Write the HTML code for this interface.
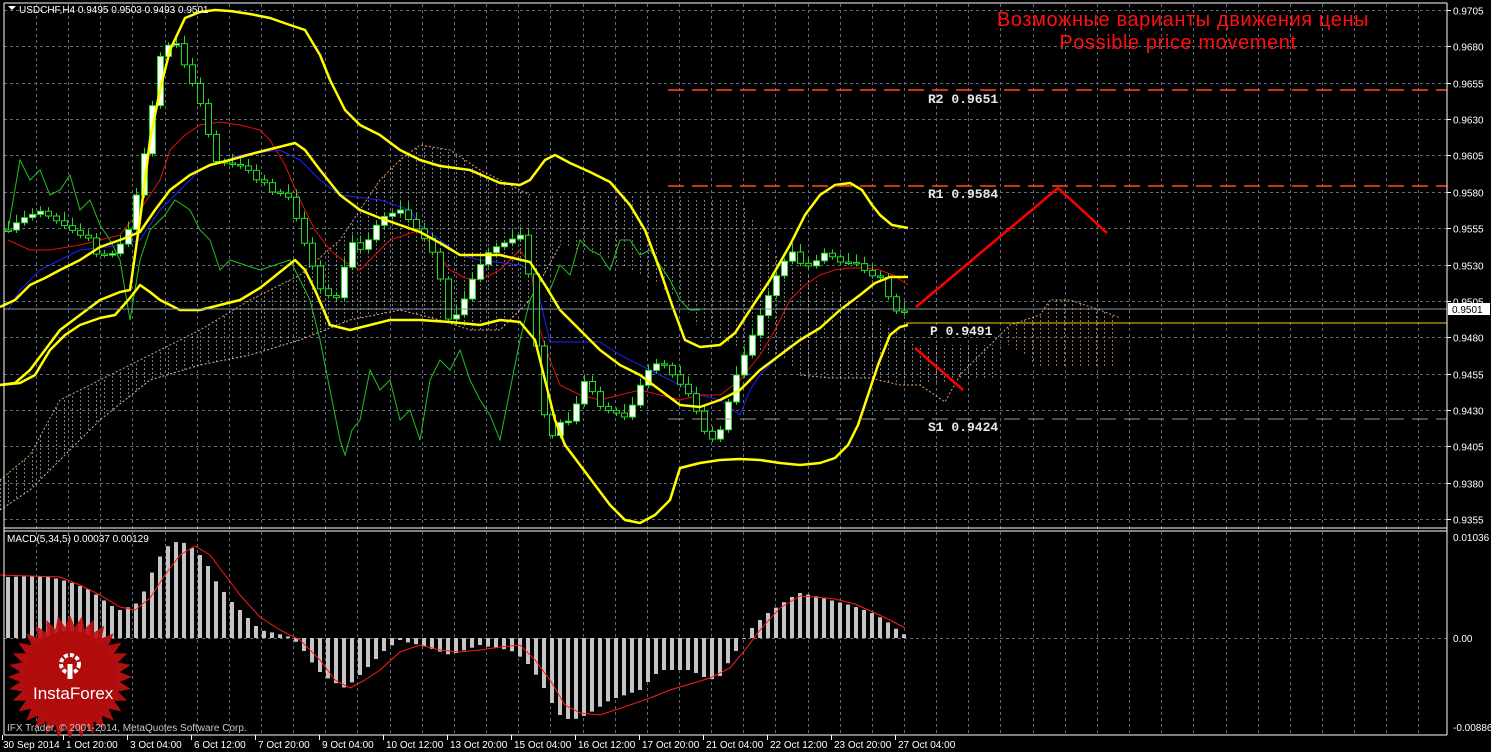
<!DOCTYPE html>
<html><head><meta charset="utf-8"><style>
html,body{margin:0;padding:0;background:#000;width:1491px;height:752px;overflow:hidden}
svg{display:block}
text{font-family:"Liberation Sans",sans-serif}
text.mono{font-family:"Liberation Mono",monospace;font-weight:bold}
</style></head><body>
<svg id="s" width="1491" height="752" xmlns="http://www.w3.org/2000/svg">
<defs>
<pattern id="hatch" width="8" height="4" patternUnits="userSpaceOnUse"><rect x="0" y="0" width="1" height="2" fill="#ddd"/></pattern>
<pattern id="hatch2" width="8" height="4" patternUnits="userSpaceOnUse"><rect x="0" y="0" width="1" height="2" fill="#e8a060"/></pattern>
</defs>
<rect width="1491" height="752" fill="#000"/>
<g id="grid" stroke="#5f6a78" stroke-width="1" stroke-dasharray="3,3"></g>
<polygon fill="url(#hatch)" opacity="0.55" points="0,480 30,455 60,400 100,380 150,355 200,330 250,300 300,275 340,240 380,180 400,160 420,145 450,150 480,170 510,185 530,195 560,195 600,195 650,195 700,198 740,200 780,260 800,270 830,290 870,310 900,335 920,345 960,345 1000,345 1000,380 960,380 920,385 900,385 860,378 820,378 800,375 780,355 740,350 700,330 680,300 650,280 600,255 560,245 530,300 500,330 470,330 440,320 400,310 350,320 300,340 250,355 200,365 150,380 100,420 60,460 30,490 0,510"/>
<polygon fill="url(#hatch2)" opacity="0.7" points="1000,345 1010,325 1040,315 1050,300 1070,300 1100,310 1115,315 1115,367 1040,367 1030,360 1010,345"/>
<g fill="none" stroke-dasharray="2,2" stroke-width="1">
<polyline stroke="#d8a070" points="0,480 30,455 60,400 100,380 150,355 200,330 250,300 300,275 340,240 380,180 400,160 420,145 450,150 480,170 510,185 530,195"/>
<polyline stroke="#e0b0a0" points="0,510 30,490 60,460 100,420 150,380 200,365 250,355 300,340 350,320 400,310 440,320 470,330 500,330 530,300 560,245"/>
<polyline stroke="#d8a070" points="800,375 830,378 870,378 900,385 920,385 945,402 960,375 990,345 1010,325 1040,315 1050,300 1070,300 1100,310 1120,318"/>
</g>
<polyline fill="none" stroke="#22c022" stroke-width="1" points="8,230 20,160 30,180 40,170 50,195 60,190 70,175 80,210 90,200 100,225 110,240 120,260 130,320 140,260 150,230 165,215 175,200 190,210 200,230 210,240 220,270 230,260 245,265 260,270 275,265 290,260 300,280 310,300 320,340 330,390 340,440 345,455 352,430 360,420 370,370 380,390 390,380 400,420 410,410 420,440 430,380 440,360 450,370 460,350 470,380 480,400 490,415 500,440 510,390 520,340 530,300 540,280 550,290 560,265 570,275 580,240 590,250 600,255 610,270 620,240 630,240 640,255 650,250 660,265 670,280 680,300 690,310 700,310"/>
<polyline fill="none" stroke="#2020ff" stroke-width="1" points="8,310 20,290 40,270 80,250 100,248 120,245 140,240 160,210 180,190 200,170 240,155 280,150 300,160 320,180 340,195 380,200 410,210 420,225 440,240 460,255 480,260 520,265 530,270 540,300 550,342 600,342 620,355 650,370 680,385 700,395 720,400 740,415 750,390 760,375 775,360 790,345"/>
<polyline fill="none" stroke="#e01010" stroke-width="1" points="8,240 30,250 50,250 80,245 100,240 120,235 140,210 160,180 170,150 185,135 200,125 220,122 240,125 260,130 270,140 285,165 300,200 315,230 330,250 345,262 360,270 375,255 390,240 405,235 420,230 435,250 450,270 465,278 480,280 500,270 520,250 530,265 540,330 550,360 560,385 580,395 600,400 620,395 640,390 660,395 680,400 700,395 720,395 740,380 760,355 775,330 790,300 805,285 820,275 835,270 850,268 865,268 880,270 895,276 908,285"/>
<g id="candles"></g>
<g fill="none" stroke="#ffff00" stroke-width="2.5" stroke-linejoin="round">
<polyline points="0,385 15,383 30,370 45,350 60,330 80,315 100,300 120,292 130,290 140,220 150,140 160,90 170,50 185,18 200,12 215,10 230,11 250,14 270,18 290,25 305,30 320,55 330,80 345,110 360,125 380,135 400,150 420,160 440,166 470,170 500,183 520,185 530,180 545,160 555,155 570,163 590,172 610,182 630,205 645,230 660,270 672,305 685,340 700,347 720,345 735,333 750,310 770,280 790,245 805,215 820,195 835,185 850,183 862,190 872,205 880,215 892,225 908,228"/>
<polyline points="0,307 15,300 30,285 45,278 60,270 80,260 100,247 120,240 140,232 155,210 170,190 190,175 210,165 230,160 255,153 275,148 295,143 305,150 320,170 340,195 360,210 380,218 400,225 420,232 440,243 460,255 500,255 530,262 545,285 560,310 580,330 600,350 620,365 640,375 660,390 680,405 700,407 720,400 740,390 760,370 780,355 800,340 820,328 840,310 860,295 875,283 890,277 908,277"/>
<polyline points="0,385 20,383 35,375 50,350 65,335 80,325 100,318 115,315 130,298 140,285 150,292 160,300 180,310 200,310 220,305 240,300 260,288 280,272 295,260 305,270 315,290 330,325 350,330 370,325 390,320 420,320 450,322 480,325 500,320 520,322 535,340 545,380 555,420 565,445 580,465 595,485 610,505 625,520 640,523 655,515 670,500 680,468 700,463 720,460 740,459 760,460 780,463 800,465 820,463 835,458 848,445 858,425 868,395 878,365 890,335 900,327 908,325"/>
</g>
<line x1="668" y1="90" x2="1447" y2="90" stroke="#ff4a1a" stroke-width="1.5" stroke-dasharray="16,8"/>
<line x1="668" y1="186" x2="1447" y2="186" stroke="#ff4a1a" stroke-width="1.5" stroke-dasharray="16,8"/>
<line x1="668" y1="419" x2="1447" y2="419" stroke="#b09090" stroke-width="1" stroke-dasharray="16,8"/>
<line x1="4" y1="309" x2="1447" y2="309" stroke="#8494a4" stroke-width="1"/>
<line x1="906" y1="323" x2="1447" y2="323" stroke="#ffcc00" stroke-width="1"/>
<polyline fill="none" stroke="#ff0000" stroke-width="2.5" points="916,307 1058,188 1107,233"/>
<polyline fill="none" stroke="#ff0000" stroke-width="2.5" points="915,348 963,390"/>
<g font-size="13" fill="#e8e8e8">
<text class="mono" x="928" y="103">R2 0.9651</text>
<text class="mono" x="928" y="198">R1 0.9584</text>
<text class="mono" x="930" y="335">P 0.9491</text>
<text class="mono" x="928" y="431">S1 0.9424</text>
</g>
<text x="1183" y="26" font-size="20" fill="#ff1010" text-anchor="middle" letter-spacing="0.6">Возможные варианты движения цены</text>
<text x="1178" y="49" font-size="20" fill="#ff1010" text-anchor="middle" letter-spacing="0.6">Possible price movement</text>
<g id="macd"></g>
<polyline fill="none" stroke="#ff1a1a" stroke-width="1" points="0,575 30,576 60,577 80,585 100,595 120,607 135,610 150,598 165,575 180,555 195,546 210,555 225,575 240,595 260,617 280,630 300,640 320,660 335,680 350,688 365,680 380,670 400,652 420,645 440,650 460,652 480,650 500,647 520,645 535,660 550,680 565,705 580,713 600,715 615,710 630,705 650,698 670,690 690,684 710,678 730,668 745,650 760,630 780,608 800,596 815,597 835,599 855,604 875,613 890,620 905,628"/>
<line x1="4" y1="3" x2="1447" y2="3" stroke="#fff"/>
<line x1="4" y1="3" x2="4" y2="735" stroke="#fff"/>
<line x1="1447" y1="3" x2="1447" y2="735" stroke="#fff"/>
<line x1="4" y1="528" x2="1447" y2="528" stroke="#fff"/>
<line x1="4" y1="531" x2="1447" y2="531" stroke="#fff"/>
<line x1="4" y1="735" x2="1447" y2="735" stroke="#fff"/>
<path d="M8,6 l4,4 l4,-4z" fill="#fff"/>
<text x="19" y="13" font-size="10" fill="#fff">USDCHF,H4  0.9495 0.9503 0.9493 0.9501</text>
<text x="7" y="542" font-size="10" fill="#fff">MACD(5,34,5) 0.00037 0.00129</text>
<g id="axis" font-size="10" fill="#fff"></g>
<rect x="1448" y="303" width="42" height="12" fill="#fff"/>
<text x="1452" y="313" font-size="10" fill="#000">0.9501</text>
<g id="logo"></g>
<text x="33" y="699" font-size="17" fill="#fff">InstaForex</text>
<text x="7" y="731" font-size="10" fill="#c8c8c8">IFX Trader, © 2001-2014, MetaQuotes Software Corp.</text>
</svg>
<script>
var NS="http://www.w3.org/2000/svg";
function el(p,t,a){var e=document.createElementNS(NS,t);for(var k in a)e.setAttribute(k,a[k]);p.appendChild(e);return e;}
var g=document.getElementById('grid');
for(var x=36;x<1447;x+=32.15)el(g,'line',{x1:Math.round(x)+.5,y1:4,x2:Math.round(x)+.5,y2:734});
var ax=document.getElementById('axis');
var pr=["0.9705","0.9680","0.9655","0.9630","0.9605","0.9580","0.9555","0.9530","0.9505","0.9480","0.9455","0.9430","0.9405","0.9380","0.9355"];
for(var i=0;i<15;i++){var y=Math.round(10+i*36.36)+.5;el(g,'line',{x1:4,y1:y,x2:1447,y2:y});el(ax,'line',{x1:1447,y1:y,x2:1451,y2:y,stroke:'#fff'});var t=el(ax,'text',{x:1453,y:y+4});t.textContent=pr[i];}
el(g,'line',{x1:4,y1:638.5,x2:1447,y2:638.5});
var t=el(ax,'text',{x:1453,y:541});t.textContent="0.01036";t=el(ax,'text',{x:1453,y:642});t.textContent="0.00";t=el(ax,'text',{x:1453,y:731});t.textContent="-0.00886";
var dl=["30 Sep 2014","1 Oct 20:00","3 Oct 04:00","6 Oct 12:00","7 Oct 20:00","9 Oct 04:00","10 Oct 12:00","13 Oct 20:00","15 Oct 04:00","16 Oct 12:00","17 Oct 20:00","21 Oct 04:00","22 Oct 12:00","23 Oct 20:00","27 Oct 04:00"];
for(var i=0;i<15;i++){var x=3+i*64;if(i>0)x=66+(i-1)*64;t=el(ax,'text',{x:x,y:748});t.textContent=dl[i];el(ax,'line',{x1:x-2.5+(i?0:2),y1:735,x2:x-2.5+(i?0:2),y2:740,stroke:'#fff'});}
function interp(pts,x){for(var i=1;i<pts.length;i++){if(x<=pts[i][0]){var a=pts[i-1],b=pts[i];return a[1]+(b[1]-a[1])*(x-a[0])/(b[0]-a[0]);}}return pts[pts.length-1][1];}
var cp=[[0,230],[20,215],[40,210],[60,225],[80,240],[100,250],[115,250],[130,225],[145,150],[160,60],[172,45],[185,60],[200,100],[215,160],[230,165],[245,170],[260,190],[275,185],[290,195],[300,230],[320,290],[335,305],[350,250],[365,240],[380,215],[400,210],[415,230],[430,250],[450,320],[462,300],[475,270],[490,250],[505,245],[520,240],[532,300],[540,380],[548,440],[558,420],[570,420],[585,380],[600,410],[615,420],[630,405],[645,370],[660,360],[675,380],[690,400],[705,440],[720,425],[735,375],[750,340],[765,305],[780,270],[795,255],[810,262],[825,250],[840,262],[855,265],[870,280],[885,285],[898,310],[908,308]];
var cg=document.getElementById('candles'),prev=230;
for(var x=8;x<=908;x+=8){var c=interp(cp,x)+((x*37)%11-5)*1.2;var o=prev;var hi=Math.min(o,c)-3-((x*13)%7);var lo=Math.max(o,c)+3+((x*7)%8);
el(cg,'line',{x1:x+.5,y1:hi,x2:x+.5,y2:lo,stroke:'#22dd22'});
var bt=Math.min(o,c),bh=Math.max(Math.abs(c-o),1.5);
el(cg,'rect',{x:x-2.5,y:bt,width:6,height:bh,fill:c<o?'#fff':'#000',stroke:'#22dd22','stroke-width':1});prev=c;}
var mp=[[8,577],[30,576],[50,577],[70,582],[90,590],[110,605],[120,610],[135,605],[145,590],[155,565],[165,548],[175,542],[185,543],[195,550],[205,560],[215,580],[230,600],[245,615],[260,630],[275,633],[290,637],[300,645],[310,660],[320,672],[330,680],[345,688],[355,680],[370,665],[385,650],[400,640],[410,643],[420,645],[435,650],[450,655],[465,650],[480,645],[495,648],[510,650],[525,660],[540,680],[550,700],[560,715],[570,720],[580,718],[595,710],[610,700],[625,695],[640,690],[650,680],[660,670],[675,670],[690,670],[700,675],[710,680],[720,676],[730,660],[740,645],[750,630],[765,615],[780,605],[790,598],[800,593],[815,596],[830,600],[850,605],[870,612],[885,620],[895,628],[905,635]];
var mg=document.getElementById('macd');
for(var x=8;x<=905;x+=8){var y=interp(mp,x);var a=Math.min(y,638),b=Math.max(y,638);el(mg,'rect',{x:x-2,y:a,width:4,height:Math.max(b-a,1),fill:'#c4c4c4'});}
var lg=document.getElementById('logo'),pts=[],cx=70,cy=677;
for(var i=0;i<64;i++){var r=i%2?50:62,an=i*Math.PI/32;pts.push((cx+r*Math.cos(an)).toFixed(1)+','+(cy+r*Math.sin(an)).toFixed(1));}
el(lg,'polygon',{points:pts.join(' '),fill:'#c01010',opacity:'0.92'});
el(lg,'circle',{cx:cx,cy:cy,r:46,fill:'#b00c0c'});
el(lg,'circle',{cx:70,cy:664,r:9,fill:'none',stroke:'#fff','stroke-width':4,'stroke-dasharray':'4,2'});
el(lg,'rect',{x:67.5,y:664,width:5,height:15,fill:'#fff'});
</script>
</body></html>
